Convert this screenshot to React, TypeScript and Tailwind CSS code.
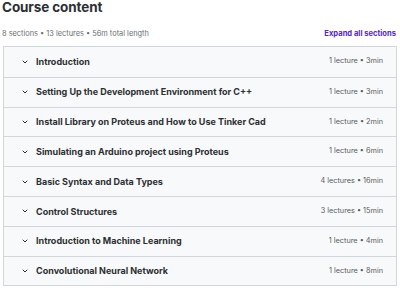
import React from "react";

const sections = [
  { title: "Introduction", meta: "1 lecture • 3min" },
  { title: "Setting Up the Development Environment for C++", meta: "1 lecture • 3min" },
  { title: "Install Library on Proteus and How to Use Tinker Cad", meta: "1 lecture • 2min" },
  { title: "Simulating an Arduino project using Proteus", meta: "1 lecture • 6min" },
  { title: "Basic Syntax and Data Types", meta: "4 lectures • 16min" },
  { title: "Control Structures", meta: "3 lectures • 15min" },
  { title: "Introduction to Machine Learning", meta: "1 lecture • 4min" },
  { title: "Convolutional Neural Network", meta: "1 lecture • 8min" },
];

function Chevron() {
  return (
    <svg width="8" height="8" viewBox="0 0 24 24" fill="none" stroke="#2d2f31" strokeWidth="3" strokeLinecap="round" strokeLinejoin="round">
      <path d="M6 9l6 6 6-6" />
    </svg>
  );
}

export default function App() {
  return (
    <div className="w-[400px] h-[290px] bg-white overflow-hidden text-[#2d2f31]" style={{ fontFamily: "Inter, 'Noto Sans', sans-serif" }}>
      <h2 className="px-[2px] text-[13.5px] font-bold leading-[15px] tracking-[-0.1px]">Course content</h2>
      <div className="flex items-center justify-between pl-[2px] pr-[4px] mt-[13px] h-[12px]">
        <span className="text-[7.4px] text-[#6a6f73]">8 sections • 13 lectures • 56m total length</span>
        <span className="text-[7.6px] font-bold text-[#5624d0]">Expand all sections</span>
      </div>
      <div className="mx-[3px] mt-[6px] border border-[#d1d7dc]">
        {sections.map((s, i) => (
          <div key={i} className={`flex items-center h-[29.8px] bg-[#f7f9fa] pl-[17px] pr-[13px] ${i > 0 ? "border-t border-[#d1d7dc]" : ""}`}>
            <Chevron />
            <span className="ml-[7px] text-[9px] font-bold flex-1">{s.title}</span>
            <span className="text-[7.3px] text-[#595c5f]">{s.meta}</span>
          </div>
        ))}
      </div>
    </div>
  );
}
